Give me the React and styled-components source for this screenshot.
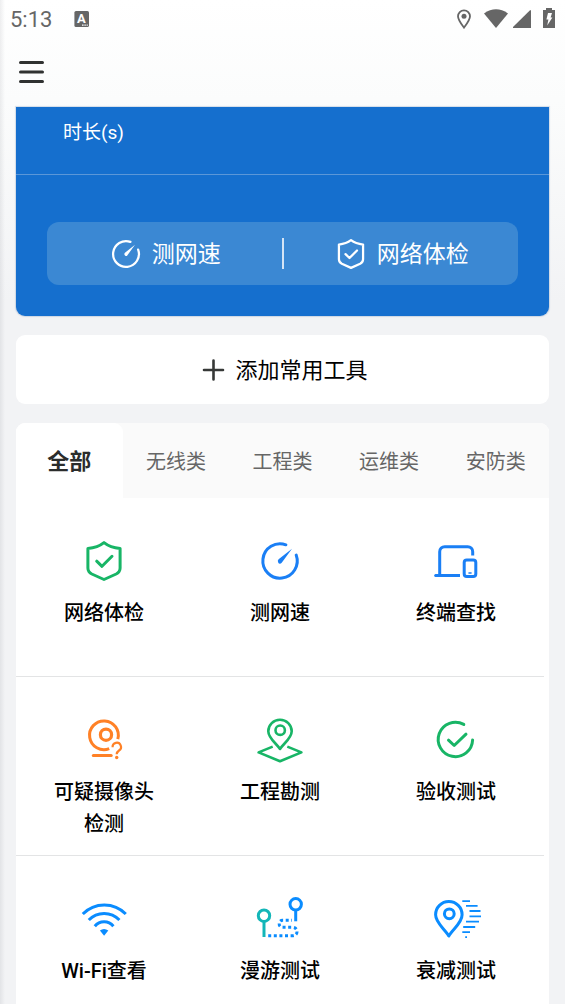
import React, { useState } from 'react';
import styled, { createGlobalStyle } from 'styled-components';

const GlobalStyle = createGlobalStyle`
  *, *::before, *::after { box-sizing: border-box; }
  body {
    margin: 0;
    background: #f2f3f5;
    font-family: Roboto, "Noto Sans CJK SC", sans-serif;
    color: #000;
  }
  button {
    margin: 0;
    padding: 0;
    border: 0;
    background: none;
    font: inherit;
    color: inherit;
    cursor: pointer;
  }
`;

const Screen = styled.div`
  display: flex;
  flex-direction: column;
  min-height: 100vh;
  background:
    linear-gradient(to right, rgba(40, 45, 60, 0.08), rgba(40, 45, 60, 0) 5px),
    linear-gradient(#ffffff, #fbfcfc 100px, #f2f3f5 300px);
`;

const StatusBar = styled.div`
  display: flex;
  align-items: center;
  height: 40px;
  padding: 0 10px;
  color: #666;
`;

const Clock = styled.span`
  margin-right: 22px;
  font-size: 22px;
  line-height: 40px;
`;

const StatusIcons = styled.div`
  display: flex;
  align-items: center;
  margin-left: auto;
`;

const StatusIcon = styled.svg`
  display: block;
  width: ${(p) => p.$w}px;
  height: 24px;
  margin-bottom: 2px;
  margin-left: ${(p) => p.$gap || 0}px;
  fill: currentColor;
`;

const BadgeLetter = styled.text`
  fill: #fff;
  font-size: 13px;
  font-weight: 700;
  text-anchor: middle;
`;

const Header = styled.header`
  display: flex;
  align-items: center;
  height: 67px;
  padding: 0 16px;
`;

const MenuButton = styled.button`
  display: block;
  width: 32px;
  height: 67px;
`;

const Main = styled.main`
  display: flex;
  flex: 1;
  flex-direction: column;
  gap: 19px;
  padding: 0 16px;
`;

const SpeedCard = styled.section`
  border-radius: 0 0 9px 9px;
  background: #156fce;
  box-shadow: 0 0 1px 1px rgba(120, 150, 190, 0.3);
  color: #fff;
`;

const Duration = styled.div`
  height: 68px;
  padding: 11px 47px 0;
  border-bottom: 1px solid #5b97d8;
  font-size: 19px;
  line-height: 30px;
`;

const QuickActions = styled.div`
  display: flex;
  align-items: center;
  height: 63px;
  margin: 47px 31px 0;
  border-radius: 12px;
  background: #3b88d3;
`;

const SpeedBody = styled.div`
  display: flow-root;
  padding-bottom: 31px;
`;

const QuickAction = styled.button`
  display: flex;
  flex: 1;
  align-items: center;
  justify-content: center;
  gap: 8px;
  height: 63px;
  font-size: 23px;
`;

const ActionLabel = styled.span`
  padding-bottom: 3px;
`;

const QuickDivider = styled.span`
  width: 2px;
  height: 31px;
  background: #d4e4f5;
`;

const AddButton = styled.button`
  display: flex;
  align-items: center;
  justify-content: center;
  gap: 6px;
  height: 69px;
  border-radius: 9px;
  background: #fff;
  font-size: 22px;
`;

const ToolCard = styled.section`
  flex: 1;
  border-radius: 9px 9px 0 0;
  background: #fff;
`;

const TabList = styled.div`
  display: flex;
  height: 75px;
  border-radius: 9px 9px 0 0;
  background: #fafafa;
`;

const Tab = styled.button`
  flex: 1;
  padding-bottom: ${(p) => (p.$active ? 3 : 0)}px;
  border-radius: 9px 9px 0 0;
  background: ${(p) => (p.$active ? '#fff' : 'transparent')};
  color: ${(p) => (p.$active ? '#2b2d2c' : '#666')};
  font-size: ${(p) => (p.$active ? 22 : 20)}px;
  font-weight: ${(p) => (p.$active ? 700 : 400)};
`;

const ToolRows = styled.div`
  padding-right: 5px;
`;

const ToolRow = styled.div`
  display: grid;
  grid-template-columns: repeat(3, 1fr);
  min-height: 179px;
  border-bottom: 1px solid #e3e4e5;

  &:last-child {
    min-height: 0;
    border-bottom: 0;
  }
`;

const Tool = styled.button`
  display: flex;
  flex-direction: column;
  align-items: center;
  gap: 12px;
  padding: 39px 32px 15px;
  font-size: 20px;
  line-height: 32px;
  font-weight: 500;
`;

const Glyph = styled.svg`
  display: block;
  flex: none;
  width: ${(p) => p.$size}px;
  height: ${(p) => p.$size}px;
  overflow: visible;
  fill: none;
  stroke: ${(p) => p.$color};
  stroke-width: 3;
  stroke-linecap: round;
  stroke-linejoin: round;
`;

function Icon({ size = 48, color, children }) {
  return (
    <Glyph viewBox="0 0 48 48" $size={size} $color={color} aria-hidden="true">
      {children}
    </Glyph>
  );
}

const shield = (
  <>
    <path d="M24 5.6C28 8.8 33 10.8 40.1 11.4V31C40.1 34 38.8 35.6 36.2 37L24 42.5L11.8 37C9.2 35.6 7.9 34 7.9 31V11.4C15 10.8 20 8.8 24 5.6Z" />
    <path d="M16.7 24.2L22 29.3L32 19.3" />
  </>
);

const gauge = (
  <>
    <path d="M29.9 7.8A17.2 17.2 0 1 0 40.2 18.1" />
    <path d="M36 11.7L25.9 25.6A2 2 0 0 1 22.2 25.4A2.6 2.6 0 0 1 22.6 22.2Z" fill="currentColor" stroke="none" />
  </>
);

const devices = (
  <>
    <path d="M7.7 38.3V14.7A5 5 0 0 1 12.7 9.7H35.7A5 5 0 0 1 40.7 14.7V18.5" strokeLinecap="butt" />
    <path d="M3.5 38.5H28" strokeLinecap="butt" />
    <path d="M3.7 38.5H8" />
    <rect x="32.2" y="23" width="11.6" height="16.6" rx="2.6" />
    <path d="M37 36H39" strokeWidth="1.6" />
  </>
);

const camera = (
  <>
    <path d="M37.8 23.2A14.4 14.4 0 1 0 29.2 32.7" strokeLinecap="butt" />
    <circle cx="26" cy="18.7" r="5.6" strokeWidth="3.2" />
    <path d="M13.3 39.6H31.2" />
    <path d="M32.6 31.2A4.2 4.2 0 1 1 39 34.5C37.2 35.8 36.7 36.2 36.7 38.3" strokeWidth="2.2" strokeLinecap="butt" />
    <circle cx="36.7" cy="41.5" r="1.7" fill="currentColor" stroke="none" />
  </>
);

const survey = (
  <>
    <path d="M24 33C20.5 27.5 12.3 22.2 12.3 15.2A11.7 11.4 0 0 1 35.7 15.2C35.7 22.2 27.5 27.5 24 33Z" strokeWidth="2.6" />
    <circle cx="24.2" cy="14.2" r="4.7" strokeWidth="2.6" />
    <path d="M16.7 30.6L2.6 36.4L24 45.2L45.4 36.4L31.3 30.6" strokeWidth="2.6" strokeLinecap="butt" />
  </>
);

const acceptance = (
  <>
    <path d="M31.8 8.4A17.2 17.2 0 1 0 40.6 24" />
    <path d="M16.5 24.2L22.2 29.5L34 18.2" />
  </>
);

const wifi = (
  <>
    <path d="M2.8 19A30 30 0 0 1 45.8 19" strokeLinecap="butt" />
    <path d="M8.8 25A21 21 0 0 1 39.4 25" strokeLinecap="butt" />
    <path d="M14.8 31.2A12 12 0 0 1 33.4 31.2" strokeLinecap="butt" />
    <path d="M19.9 35.4Q24 32.4 28.3 35.4L24.1 40.8Z" fill="currentColor" stroke="none" />
  </>
);

const roaming = (
  <>
    <g stroke="#13b6b8">
      <circle cx="8" cy="20.7" r="5.7" />
      <path d="M8 26.5V42" strokeLinecap="butt" />
    </g>
    <circle cx="39.7" cy="9.3" r="5.7" />
    <path d="M39.7 15V26.3" strokeLinecap="butt" />
    <path
      d="M12.2 40.7H36.5C42.6 40.7 42.6 32.3 36.5 32.3H26.6C22 32.3 22 25.3 26.6 25.3H36"
      strokeLinecap="butt"
      strokeDasharray="3 2.6"
    />
  </>
);

const attenuation = (
  <>
    <path d="M16.8 41C13.3 34.4 3.6 28.2 3.6 19.8A13.2 13.2 0 0 1 30.1 19.8C30.1 28.2 20.4 34.4 16.8 41Z" />
    <circle cx="17.3" cy="18.8" r="4.9" />
    <path
      d="M30.3 6.2H38M34 10.8H45.6M37.5 16H48.5M37.5 21.3H49M34 26.7H47M31.2 32H43.2M30.3 37.2H38M33.2 42.2H35"
      strokeWidth="1.8"
      strokeLinecap="butt"
    />
  </>
);

const GREEN = '#18b566';
const BLUE = '#1a7ff5';
const SKY = '#0a8cff';
const ORANGE = '#ff8126';

const TABS = ['全部', '无线类', '工程类', '运维类', '安防类'];

const TOOLS = [
  [
    { name: '网络体检', color: GREEN, art: shield },
    { name: '测网速', color: BLUE, art: gauge },
    { name: '终端查找', color: BLUE, art: devices },
  ],
  [
    { name: '可疑摄像头检测', color: ORANGE, art: camera },
    { name: '工程勘测', color: GREEN, art: survey },
    { name: '验收测试', color: GREEN, art: acceptance },
  ],
  [
    { name: 'Wi-Fi查看', color: SKY, art: wifi },
    { name: '漫游测试', color: SKY, art: roaming },
    { name: '衰减测试', color: SKY, art: attenuation },
  ],
];

const Tinted = styled.span`
  display: block;
  color: ${(p) => p.$color};
`;

export default function App() {
  const [active, setActive] = useState(0);

  return (
    <>
      <GlobalStyle />
      <Screen>
        <StatusBar>
          <Clock>5:13</Clock>
          <StatusIcon $w={16} viewBox="0 0 16 24" aria-hidden="true">
            <rect x="0.4" y="4" width="14.6" height="16" rx="1.6" />
            <BadgeLetter x="7.4" y="16">A</BadgeLetter>
            <path d="M8 18.2H9.6M10.4 18.2H11.8M12.6 18.2H13.8" stroke="#fff" strokeWidth="1.2" />
          </StatusIcon>
          <StatusIcons>
            <StatusIcon $w={16} viewBox="0 0 16 24" aria-hidden="true">
              <path
                d="M8 20.6C5.4 17.2 2 13 2 9.3A6 6 0 0 1 14 9.3C14 13 10.6 17.2 8 20.6Z"
                fill="none"
                stroke="currentColor"
                strokeWidth="1.8"
              />
              <circle cx="8" cy="9.2" r="2.5" />
            </StatusIcon>
            <StatusIcon $w={24} $gap={12} viewBox="0 0 24 24" aria-hidden="true">
              <path d="M0 6.4Q12 -2 24 6.4L12 21Z" />
            </StatusIcon>
            <StatusIcon $w={18} $gap={5} viewBox="0 0 18 24" aria-hidden="true">
              <path d="M0 21V20L17 3.2H18V21Z" />
            </StatusIcon>
            <StatusIcon $w={12} $gap={12} viewBox="0 0 12 24" aria-hidden="true">
              <path d="M3 1H9V3H12V21H0V3H3Z" />
              <path d="M5 6H9L7.6 10.6H9.4L4.2 18.6L5.4 12.6H3.4Z" fill="#fff" />
            </StatusIcon>
          </StatusIcons>
        </StatusBar>

        <Header>
          <MenuButton aria-label="菜单">
            <svg width="32" height="32" viewBox="0 0 32 32" aria-hidden="true">
              <path
                d="M4.5 6.5H26.5M4.5 16H26.5M4.5 25.5H26.5"
                stroke="#303231"
                strokeWidth="3"
                strokeLinecap="round"
              />
            </svg>
          </MenuButton>
        </Header>

        <Main>
          <SpeedCard>
            <Duration>时长(s)</Duration>
            <SpeedBody>
              <QuickActions>
                <QuickAction>
                  <Icon size={36} color="#fff">{gauge}</Icon>
                  <ActionLabel>测网速</ActionLabel>
                </QuickAction>
                <QuickDivider />
                <QuickAction>
                  <Icon size={36} color="#fff">{shield}</Icon>
                  <ActionLabel>网络体检</ActionLabel>
                </QuickAction>
              </QuickActions>
            </SpeedBody>
          </SpeedCard>

          <AddButton>
            <svg width="32" height="32" viewBox="0 0 32 32" aria-hidden="true">
              <path d="M7 16H26M16.5 6.5V25.5" stroke="#363837" strokeWidth="2.6" strokeLinecap="round" />
            </svg>
            <ActionLabel>添加常用工具</ActionLabel>
          </AddButton>

          <ToolCard>
            <TabList role="tablist">
              {TABS.map((label, i) => (
                <Tab
                  key={label}
                  role="tab"
                  aria-selected={i === active}
                  $active={i === active}
                  onClick={() => setActive(i)}
                >
                  {label}
                </Tab>
              ))}
            </TabList>
            <ToolRows>
              {TOOLS.map((row) => (
                <ToolRow key={row[0].name}>
                  {row.map((tool) => (
                    <Tool key={tool.name}>
                      <Tinted $color={tool.color}>
                        <Icon color={tool.color}>{tool.art}</Icon>
                      </Tinted>
                      {tool.name}
                    </Tool>
                  ))}
                </ToolRow>
              ))}
            </ToolRows>
          </ToolCard>
        </Main>
      </Screen>
    </>
  );
}
